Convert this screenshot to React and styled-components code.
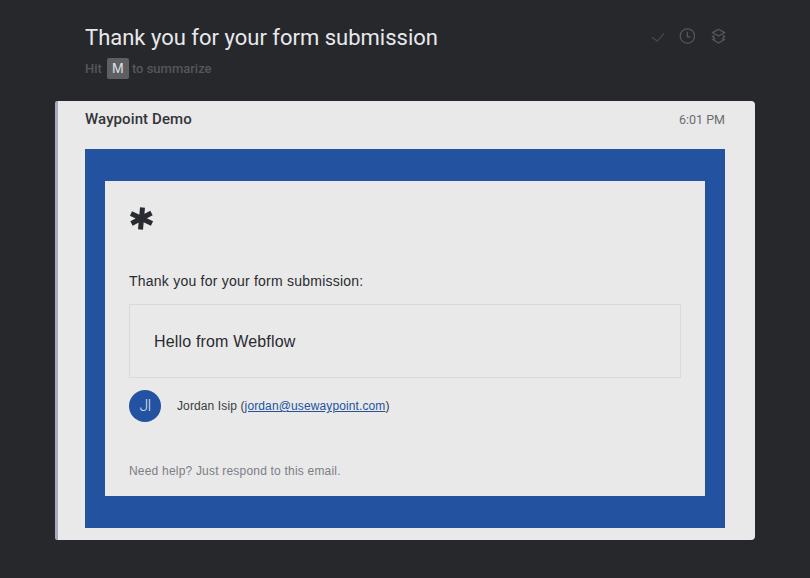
import React from "react";
import styled, { createGlobalStyle } from "styled-components";

const Global = createGlobalStyle`
  html, body { margin: 0; padding: 0; background: #27282c; }
  body { width: 810px; height: 578px; overflow: hidden; font-family: "Liberation Sans", Arial, sans-serif; }
`;

const Page = styled.div`
  width: 810px;
  height: 578px;
  box-sizing: border-box;
  padding: 0 55px;
  background: #27282c;
  display: flex;
  flex-direction: column;
`;

const Header = styled.header`
  height: 101px;
  box-sizing: border-box;
  padding: 24px 29px 0 30px;
  display: flex;
  justify-content: space-between;
  align-items: flex-start;
`;

const Heading = styled.div`
  display: flex;
  flex-direction: column;
`;

const Title = styled.h1`
  margin: 0;
  font: 400 22px/28px Roboto, sans-serif;
  letter-spacing: 0;
  color: #e8e8ec;
`;

const Hint = styled.div`
  margin-top: 6px;
  display: flex;
  align-items: center;
  font: 500 13px/21px Roboto, sans-serif;
  color: #55565b;
`;

const Key = styled.span`
  width: 22px;
  height: 21px;
  margin: 0 3px 0 5px;
  border-radius: 2px;
  background: #5e5f63;
  color: #e3e3e6;
  font: 400 14px/21px "Liberation Sans", sans-serif;
  text-align: center;
`;

const Actions = styled.div`
  display: flex;
  align-items: center;
  gap: 15px;
  margin-top: 4px;
  color: #55565b;
`;

const Card = styled.article`
  width: 700px;
  height: 439px;
  box-sizing: border-box;
  padding: 0 30px 12px 27px;
  background: #e9e9e9;
  border-left: 3px solid #a9a9c0;
  border-radius: 2px 4px 4px 2px;
  display: flex;
  flex-direction: column;
`;

const CardTop = styled.div`
  height: 48px;
  flex: none;
  display: flex;
  justify-content: space-between;
  align-items: flex-start;
`;

const Sender = styled.div`
  margin-top: 8px;
  font: 500 15px/20px Roboto, sans-serif;
  letter-spacing: 0.1px;
  color: #33343a;
`;

const Time = styled.div`
  margin-top: 9px;
  font: 400 12.5px/20px Roboto, sans-serif;
  color: #6b6c72;
`;

const Mail = styled.div`
  flex: 1;
  box-sizing: border-box;
  padding: 32px 20px;
  background: #2353a0;
  display: flex;
`;

const MailBody = styled.div`
  flex: 1;
  box-sizing: border-box;
  padding: 25px 24px 0;
  background: #e9e9e9;
  display: flex;
  flex-direction: column;
`;

const Logo = styled.svg`
  display: block;
  width: 25px;
  height: 25px;
`;

const Intro = styled.p`
  margin: 40px 0 0;
  font-size: 14px;
  line-height: 20px;
  letter-spacing: 0.23px;
  color: #2a2b30;
`;

const Quote = styled.div`
  margin-top: 13px;
  height: 74px;
  box-sizing: border-box;
  padding: 2px 0 0 24px;
  border: 1px solid #d9d9d9;
  display: flex;
  align-items: center;
  font-size: 16px;
  letter-spacing: 0.17px;
  color: #2a2b30;
`;

const Person = styled.div`
  margin-top: 12px;
  display: flex;
  align-items: center;
  gap: 16px;
  font-size: 12px;
  letter-spacing: 0.12px;
  color: #3a3b40;
`;

const Avatar = styled.div`
  width: 32px;
  height: 32px;
  border-radius: 50%;
  background: #2353a0;
  color: #d8deea;
  font: 300 16px/32px Roboto, sans-serif;
  letter-spacing: -1px;
  text-align: center;
`;

const MailLink = styled.a`
  color: #2353a0;
  text-decoration: underline;
`;

const Help = styled.p`
  margin: 41px 0 0;
  font-size: 12px;
  line-height: 16px;
  letter-spacing: 0.2px;
  color: #7c7d85;
`;

export default function App() {
  return (
    <>
      <Global />
      <Page>
        <Header>
          <Heading>
            <Title>Thank you for your form submission</Title>
            <Hint>Hit <Key>M</Key> to summarize</Hint>
          </Heading>
          <Actions>
            <svg width="16" height="16" viewBox="0 0 16 16" fill="none" stroke="#48494e" strokeWidth="1.2">
              <path d="M4 9.3 9.3 13.3 16 5.3" />
            </svg>
            <svg width="16" height="16" viewBox="0 0 16 16" fill="none" stroke="currentColor" strokeWidth="1.3">
              <circle cx="8.4" cy="8" r="7.2" />
              <path d="M8.4 3.8V8.8H11.6" />
            </svg>
            <svg width="16" height="16" viewBox="0 0 16 16" fill="none" stroke="currentColor" strokeWidth="1.3">
              <path d="M8.5 1.2 14.6 4.6 8.5 8 2.6 4.6Z" />
              <path d="M4.4 7.2 2.6 8.6 5.2 11M12.8 7.2 14.6 8.6 12 11" />
              <path d="M4.6 10.6 2.9 11.6 8.5 15 14.3 11.6 12.4 10.6" />
            </svg>
          </Actions>
        </Header>
        <Card>
          <CardTop>
            <Sender>Waypoint Demo</Sender>
            <Time>6:01 PM</Time>
          </CardTop>
          <Mail>
            <MailBody>
              <Logo viewBox="0 0 25 25" fill="none" stroke="#2a2b30" strokeWidth="5">
                <path d="M13.5 1.5 11.5 23.5M2 7.5 23 17.5M22.5 7 2.5 17.5" />
              </Logo>
              <Intro>Thank you for your form submission:</Intro>
              <Quote>Hello from Webflow</Quote>
              <Person>
                <Avatar>JI</Avatar>
                <span>Jordan Isip (<MailLink>jordan@usewaypoint.com</MailLink>)</span>
              </Person>
              <Help>Need help? Just respond to this email.</Help>
            </MailBody>
          </Mail>
        </Card>
      </Page>
    </>
  );
}
